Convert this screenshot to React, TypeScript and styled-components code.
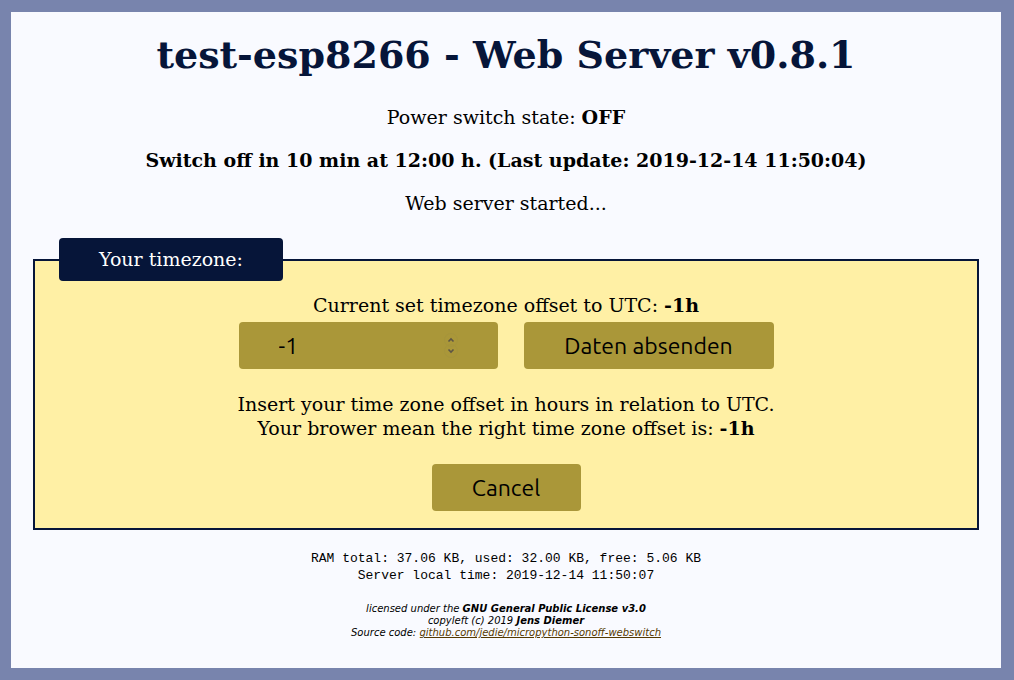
import React from 'react';
import styled, { createGlobalStyle } from 'styled-components';

const GlobalStyle = createGlobalStyle`
  * { box-sizing: border-box; }
  body {
    margin: 0;
    padding: 12px 13px 12px 11px;
    background: #7884ad;
    color: #000;
    font: 19px/24px "DejaVu Serif", serif;
    text-align: center;
  }
`;

const Page = styled.main`
  padding: 18px 22px 29px;
  background: #f9faff;
`;

const Title = styled.h1`
  margin: 0 0 25px;
  color: #061539;
  font-size: 38px;
  line-height: 50px;
`;

const Message = styled.p`
  margin: 0 0 19px;
  line-height: 24px;
`;

const Panel = styled.fieldset`
  margin: 23px 0 0;
  padding: 12px 24px 17px;
  border: 2px solid #061539;
  background: #fff0a5;
`;

const PanelTitle = styled.legend`
  margin: 0 auto 0 0;
  padding: 10px 40px;
  border-radius: 4px;
  background: #061539;
  color: #fff;
  line-height: 23px;
`;

const Row = styled.div`
  display: flex;
  justify-content: center;
  gap: 26px;
  margin: 5px 0 23px;
`;

const NumberBox = styled.div`
  position: relative;
  width: 259px;
`;

const control = `
  height: 47px;
  padding: 0 40px;
  border: 0;
  border-radius: 4px;
  background: #aa9739;
  color: #000;
  font: 23px/30px Ubuntu, "Noto Sans", sans-serif;
`;

const NumberInput = styled.input`
  ${control}
  display: block;
  width: 100%;
  appearance: textfield;
  &::-webkit-inner-spin-button { appearance: none; }
`;

const Spinner = styled.svg`
  position: absolute;
  top: 11px;
  right: 40px;
  pointer-events: none;
`;

const Button = styled.button<{ $width: number }>`
  ${control}
  width: ${(p) => p.$width}px;
  padding: 0;
`;

const Hint = styled.p`
  margin: 0 0 24px;
`;

const Status = styled.p`
  margin: 20px 0 19px;
  font: 13px/17px "Liberation Mono", monospace;
`;

const Footer = styled.footer`
  font: italic 10px/12px "DejaVu Sans", sans-serif;
`;

const SourceLink = styled.a`
  color: #553900;
`;

export default function App() {
  return (
    <>
      <GlobalStyle />
      <Page>
        <Title>test-esp8266 - Web Server v0.8.1</Title>
        <Message>Power switch state: <strong>OFF</strong></Message>
        <Message><strong>Switch off in 10 min at 12:00 h. (Last update: 2019-12-14 11:50:04)</strong></Message>
        <Message>Web server started...</Message>
        <form onSubmit={(e) => e.preventDefault()}>
          <Panel>
            <PanelTitle>Your timezone:</PanelTitle>
            <label htmlFor="offset">Current set timezone offset to UTC: <strong>-1h</strong></label>
            <Row>
              <NumberBox>
                <NumberInput id="offset" type="number" defaultValue={-1} />
                <Spinner width="14" height="26" viewBox="0 0 14 26" fill="none" aria-hidden="true">
                  <circle cx="7" cy="7" r="6.5" stroke="#a5943c" />
                  <circle cx="7" cy="18" r="6.5" stroke="#a5943c" />
                  <path d="M4.500 8.500 7 6l2.500 2.500M4.500 16.500 7 19l2.500-2.500" stroke="#5d5545" strokeWidth="1.6" />
                </Spinner>
              </NumberBox>
              <Button type="submit" $width={250}>Daten absenden</Button>
            </Row>
            <Hint>
              Insert your time zone offset in hours in relation to UTC.<br />
              Your brower mean the right time zone offset is: <strong>-1h</strong>
            </Hint>
            <Button type="button" $width={149}>Cancel</Button>
          </Panel>
        </form>
        <Status>
          RAM total: 37.06 KB, used: 32.00 KB, free: 5.06 KB<br />
          Server local time: 2019-12-14 11:50:07
        </Status>
        <Footer>
          licensed under the <strong>GNU General Public License v3.0</strong><br />
          copyleft (c) 2019 <strong>Jens Diemer</strong><br />
          Source code: <SourceLink href="https://github.com/jedie/micropython-sonoff-webswitch">github.com/jedie/micropython-sonoff-webswitch</SourceLink>
        </Footer>
      </Page>
    </>
  );
}
